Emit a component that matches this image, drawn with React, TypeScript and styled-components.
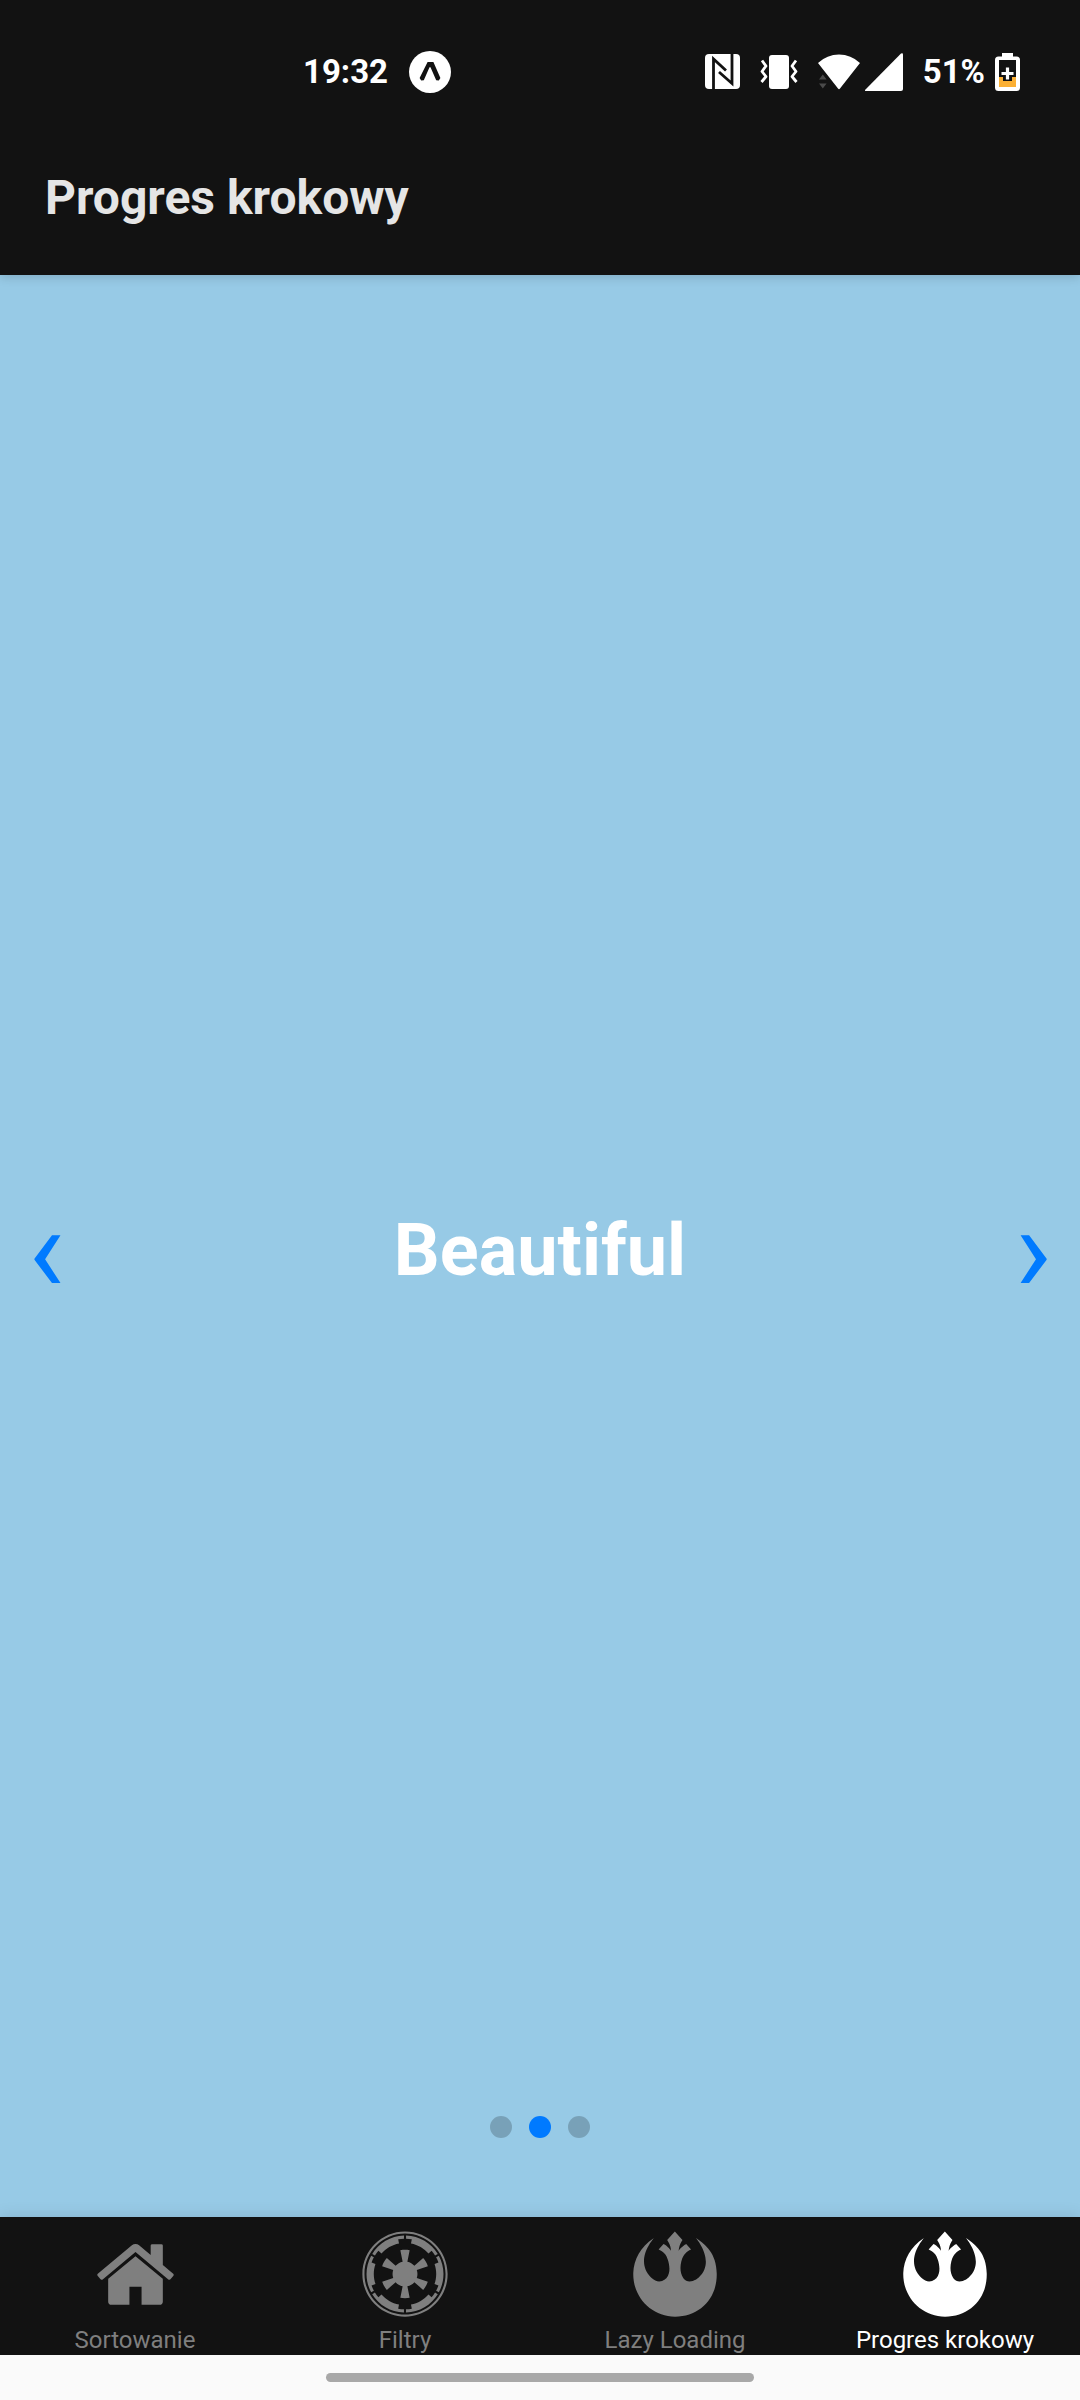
import React, { useState } from "react";
import styled, { createGlobalStyle } from "styled-components";
import { FaEmpire, FaRebel } from "react-icons/fa";

const GlobalStyle = createGlobalStyle`
  * { box-sizing: border-box; }
  body {
    margin: 0;
    font-family: Roboto, "Noto Sans", sans-serif;
    background: #fafafa;
  }
`;

const Screen = styled.div`
  display: flex;
  flex-direction: column;
  min-height: 100vh;
`;

const Header = styled.header`
  position: relative;
  background: #121212;
  box-shadow: 0 2px 10px rgba(0, 0, 0, 0.16);
`;

const StatusBar = styled.div`
  display: flex;
  align-items: center;
  justify-content: space-between;
  height: 144px;
  padding: 0 60px 0 303px;
  color: #fff;
  font-size: 33px;
  font-weight: 700;
  line-height: 40px;
`;

const StatusGroup = styled.div<{ $gap: number }>`
  display: flex;
  align-items: center;
  gap: ${(p) => p.$gap}px;
`;

const Glyph = styled.svg`
  display: block;
  flex: none;
`;

const Title = styled.h1`
  margin: 0;
  padding: 26px 45px 49px;
  color: #e5e5e5;
  font-size: 48px;
  font-weight: 700;
  line-height: 56px;
`;

const Swiper = styled.main`
  display: flex;
  flex: 1;
  flex-direction: column;
  background: #97cae6;
`;

const Slide = styled.section`
  display: grid;
  flex: 1;
  grid-template-columns: 1fr auto 1fr;
  align-items: center;
  padding: 110px 28px 0;
`;

const Word = styled.h2`
  margin: 0;
  color: #fff;
  font-size: 72px;
  font-weight: 700;
  line-height: 84px;
`;

const Arrow = styled.button<{ $side: "start" | "end" }>`
  justify-self: ${(p) => p.$side};
  padding: 0;
  border: 0;
  background: none;
  color: #007aff;
  font-family: inherit;
  font-size: 122px;
  line-height: 160px;
  cursor: pointer;
`;

const Dots = styled.div`
  display: flex;
  justify-content: center;
  gap: 17px;
  padding: 0 0 79px;
`;

const Dot = styled.button<{ $active: boolean }>`
  width: 22px;
  height: 22px;
  padding: 0;
  border: 0;
  border-radius: 50%;
  background: ${(p) => (p.$active ? "#007aff" : "rgba(0, 0, 0, 0.2)")};
  cursor: pointer;
`;

const TabBar = styled.nav`
  position: relative;
  display: grid;
  grid-template-columns: repeat(4, 1fr);
  background: #121212;
  box-shadow: 0 0 16px rgba(0, 0, 0, 0.12);
`;

const Tab = styled.a<{ $active: boolean }>`
  display: flex;
  flex-direction: column;
  align-items: center;
  gap: 8px;
  padding: 13px 0 1px;
  color: ${(p) => (p.$active ? "#fff" : "#7f7f7f")};
  font-size: 24px;
  line-height: 28px;
  text-decoration: none;
`;

const IconBox = styled.span`
  display: flex;
  align-items: center;
  justify-content: center;
  height: 88px;
`;

const GestureArea = styled.div`
  position: relative;
  display: flex;
  justify-content: center;
  padding: 18px 0;
  background: #fafafa;
`;

const GestureBar = styled.div`
  width: 428px;
  max-width: 60%;
  height: 9px;
  border-radius: 5px;
  background: #a8a8a8;
`;

const ExpoIcon = () => (
  <Glyph width="42" height="42" viewBox="0 0 42 42" aria-hidden="true">
    <circle cx="21" cy="21" r="21" fill="#fff" />
    <path
      d="M18.600 11h5.800l7 16-1.600 2.600-2.600-.4-5.700-13h-1l-5.700 13-2.600.4-1.600-2.600z"
      fill="#121212"
    />
  </Glyph>
);

const NfcIcon = () => (
  <Glyph width="35" height="36" viewBox="0 0 35 36" aria-hidden="true">
    <rect width="35" height="35" rx="4" fill="#fff" />
    <path
      d="M8.500 36V5L21 16.500M27 0v29.500L14 18"
      fill="none"
      stroke="#121212"
      strokeWidth="2.800"
    />
  </Glyph>
);

const VibrateIcon = () => (
  <Glyph width="38" height="36" viewBox="0 0 38 36" aria-hidden="true">
    <rect x="9" y="1" width="20" height="34" rx="3" fill="#fff" />
    <path
      d="M2 6.500l4 5.500-4 5.500 4 5-4.500 5.500M36 6.500l-4 5.500 4 5.500-4 5 4.500 5.500"
      fill="none"
      stroke="#fff"
      strokeWidth="2.800"
      strokeLinejoin="round"
    />
  </Glyph>
);

const WifiIcon = () => (
  <Glyph width="42" height="36" viewBox="0 0 42 36" aria-hidden="true">
    <path d="M0 9Q9 .500 21 .500T42 9L22 34.500q-1 1.500-2 0z" fill="#fff" />
    <path d="M1 25.500l3.800-5 3.800 5zM1 29.500h7.600l-3.800 5z" fill="#4a4a4a" />
  </Glyph>
);

const SignalIcon = () => (
  <Glyph width="38" height="38" viewBox="0 0 38 38" aria-hidden="true">
    <path d="M0 37L36 .500q2-1 2 1V36q0 2-2 2H1q-1.500 0-1-1z" fill="#fff" />
  </Glyph>
);

const BatteryIcon = () => (
  <Glyph width="25" height="38" viewBox="0 0 25 38" aria-hidden="true">
    <path
      d="M7 0h11v3.500h3.500Q25 3.500 25 7v27.500q0 3.500-3.500 3.500h-18Q0 38 0 34.500V7q0-3.500 3.500-3.500H7z"
      fill="#fff"
    />
    <path d="M4 7h17v18H4z" fill="#121212" />
    <path d="M4 24h4v4h9v-4h4v10H4z" fill="#fbb034" />
    <path d="M8 24h9v4H8z" fill="#121212" />
    <path d="M10.900 14.500h3.200v4.400h4.400v3.200h-4.400v4.400h-3.200v-4.400H6.500v-3.200h4.400z" fill="#fff" />
  </Glyph>
);

const HomeIcon = () => (
  <Glyph width="85" height="85" viewBox="0 0 1792 1792" fill="currentColor" aria-hidden="true">
    <path d="M1472 992v480q0 26-19 45t-45 19h-384v-384h-256v384h-384q-26 0-45-19t-19-45v-480q0-1 .5-3t.5-3l575-474 575 474q1 2 1 6zm223-69l-62 74q-8 9-21 11h-3q-13 0-21-7l-692-577-692 577q-12 8-24 7-13-2-21-11l-62-74q-8-10-7-23.500t11-21.500l719-599q32-26 76-26t76 26l244 204v-195q0-14 9-23t23-9h192q14 0 23 9t9 23v408l219 182q10 8 11 21.500t-7 23.500z" />
  </Glyph>
);

const tabs = [
  { label: "Sortowanie", icon: <HomeIcon /> },
  { label: "Filtry", icon: <FaEmpire size={88} aria-hidden /> },
  { label: "Lazy Loading", icon: <FaRebel size={88} aria-hidden /> },
  { label: "Progres krokowy", icon: <FaRebel size={88} aria-hidden /> },
];

const slideCount = 3;

export default function App() {
  const [slide, setSlide] = useState(1);
  const [tab, setTab] = useState(3);
  const move = (by: number) => setSlide((s) => (s + by + slideCount) % slideCount);

  return (
    <Screen>
      <GlobalStyle />
      <Header>
        <StatusBar>
          <StatusGroup $gap={21}>
            <time>19:32</time>
            <ExpoIcon />
          </StatusGroup>
          <StatusGroup $gap={20}>
            <NfcIcon />
            <VibrateIcon />
            <StatusGroup $gap={5}>
              <WifiIcon />
              <SignalIcon />
            </StatusGroup>
            <StatusGroup $gap={10}>
              <span>51%</span>
              <BatteryIcon />
            </StatusGroup>
          </StatusGroup>
        </StatusBar>
        <Title>{tabs[tab].label}</Title>
      </Header>
      <Swiper>
        <Slide>
          <Arrow type="button" $side="start" onClick={() => move(-1)}>
            ‹
          </Arrow>
          <Word>Beautiful</Word>
          <Arrow type="button" $side="end" onClick={() => move(1)}>
            ›
          </Arrow>
        </Slide>
        <Dots>
          {Array.from({ length: slideCount }, (_, i) => (
            <Dot
              key={i}
              type="button"
              $active={i === slide}
              aria-label={String(i + 1)}
              onClick={() => setSlide(i)}
            />
          ))}
        </Dots>
      </Swiper>
      <TabBar>
        {tabs.map(({ label, icon }, i) => (
          <Tab key={label} href="#" $active={i === tab} onClick={() => setTab(i)}>
            <IconBox>{icon}</IconBox>
            {label}
          </Tab>
        ))}
      </TabBar>
      <GestureArea>
        <GestureBar />
      </GestureArea>
    </Screen>
  );
}
